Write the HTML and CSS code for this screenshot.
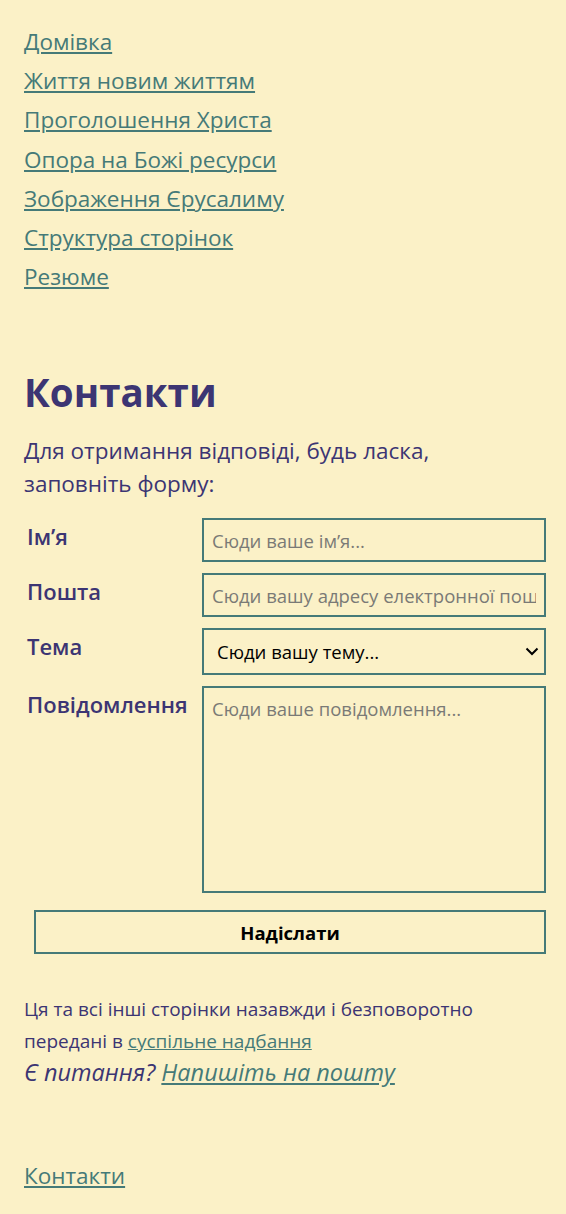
FILE: index.html
```html
<!DOCTYPE html>
<html lang="uk">
<head>
<meta charset="utf-8">
<title>Контакти</title>
<link rel="stylesheet" href="styles.css">
</head>
<body>
<nav class="nav">
  <a href="#">Домівка</a>
  <a href="#">Життя новим життям</a>
  <a href="#">Проголошення Христа</a>
  <a href="#">Опора на Божі ресурси</a>
  <a href="#">Зображення Єрусалиму</a>
  <a href="#">Структура сторінок</a>
  <a href="#">Резюме</a>
</nav>
<main class="main">
  <h1 class="title">Контакти</h1>
  <p class="intro">Для отримання відповіді, будь ласка, заповніть форму:</p>
  <form class="form">
    <label class="label" for="name">Ім’я</label>
    <input class="field" id="name" type="text" placeholder="Сюди ваше ім’я...">
    <label class="label" for="mail">Пошта</label>
    <input class="field" id="mail" type="email" placeholder="Сюди вашу адресу електронної пошти...">
    <label class="label" for="topic">Тема</label>
    <div class="select-wrap">
      <select class="field select" id="topic">
        <option>Сюди вашу тему...</option>
      </select>
      <svg class="chevron" width="14" height="9" viewBox="0 0 14 9" aria-hidden="true"><path d="M1.5 1.5 L7 7 L12.5 1.5" fill="none" stroke="#000" stroke-width="2"/></svg>
    </div>
    <label class="label" for="msg">Повідомлення</label>
    <textarea class="field area" id="msg" placeholder="Сюди ваше повідомлення..."></textarea>
    <button class="send" type="button">Надіслати</button>
  </form>
</main>
<footer class="footer">
  <p class="license">Ця та всі інші сторінки назавжди і безповоротно передані в <a href="#">суспільне надбання</a></p>
  <p class="question">Є питання? <a href="#">Напишіть на пошту</a></p>
  <a class="bottom-link" href="#">Контакти</a>
</footer>
</body>
</html>
```
FILE: styles.css
```css
html, body {
  margin: 0;
  padding: 0;
  background: #fbf1c7;
}
body {
  font-family: "Open Sans", "Noto Sans", sans-serif;
  color: #3c3573;
  padding: 22px 20px 0 24px;
}
a {
  color: #457a78;
}
.nav {
  display: flex;
  flex-direction: column;
  align-items: flex-start;
  font-size: 22.5px;
  line-height: 39.2px;
}
.main {
  margin-top: 72px;
}
.title {
  font-size: 38.5px;
  line-height: 48px;
  font-weight: 700;
  margin: 0 0 18px 0;
}
.intro {
  font-size: 22.5px;
  line-height: 33px;
  margin: 0 0 18px 0;
  max-width: 470px;
}
.form {
  display: grid;
  grid-template-columns: 178px 1fr;
  row-gap: 11px;
}
.label {
  font-size: 22px;
  font-weight: 600;
  padding: 2px 0 0 3px;
  line-height: 32px;
}
.field {
  box-sizing: border-box;
  height: 44px;
  border: 2px solid #457a78;
  background: transparent;
  font-family: inherit;
  font-size: 18.5px;
  padding: 0 8px;
  color: #000;
  border-radius: 0;
  width: 100%;
  min-width: 0;
}
.field::placeholder {
  color: #7a7a76;
}
.select-wrap {
  position: relative;
}
.select {
  display: block;
  height: 47px;
  padding-left: 13px;
  -webkit-appearance: none;
  appearance: none;
}
.chevron {
  position: absolute;
  right: 7px;
  top: 19px;
  pointer-events: none;
}
.area {
  height: 207px;
  padding: 8px;
  resize: none;
}
.send {
  grid-column: 1 / 3;
  margin: 6px 0 0 10px;
  height: 44px;
  border: 2px solid #457a78;
  background: transparent;
  font-family: inherit;
  font-size: 18.5px;
  font-weight: 700;
  color: #000;
}
.footer {
  margin-top: 39px;
}
.license {
  font-size: 19px;
  line-height: 32px;
  margin: 0;
}
.question {
  font-size: 23.5px;
  line-height: 30px;
  font-style: italic;
  margin: 0;
}
.bottom-link {
  display: inline-block;
  margin-top: 69px;
  font-size: 22.5px;
  line-height: 40px;
}
```
